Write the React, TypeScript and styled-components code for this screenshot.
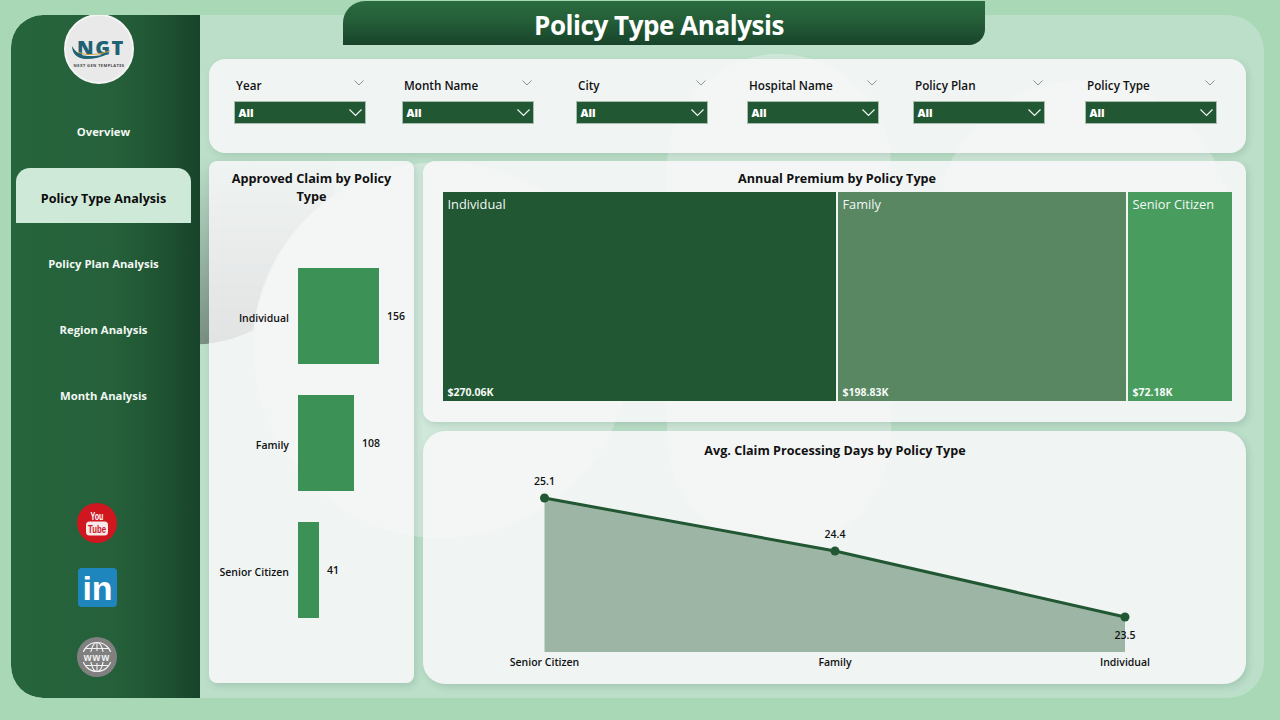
import React from 'react';
import styled, { createGlobalStyle } from 'styled-components';

const FONT = '"Open Sans", "Noto Sans", "Liberation Sans", sans-serif';

const filters = ['Year', 'Month Name', 'City', 'Hospital Name', 'Policy Plan', 'Policy Type'];
const navItems = ['Overview', 'Policy Type Analysis', 'Policy Plan Analysis', 'Region Analysis', 'Month Analysis'];
const claims = [
  { name: 'Individual', value: 156 },
  { name: 'Family', value: 108 },
  { name: 'Senior Citizen', value: 41 },
];
const premiums = [
  { name: 'Individual', value: '$270.06K', width: 393, color: '#215732' },
  { name: 'Family', value: '$198.83K', width: 288, color: '#588762' },
  { name: 'Senior Citizen', value: '$72.18K', width: 104, color: '#479c5e' },
];
const days = [
  { name: 'Senior Citizen', value: '25.1', x: 121.5, y: 27, labelY: 14 },
  { name: 'Family', value: '24.4', x: 412, y: 80, labelY: 67 },
  { name: 'Individual', value: '23.5', x: 702, y: 146, labelY: 168 },
];

function LogoMark() {
  return (
    <LogoSvg viewBox="0 0 70 70">
      <circle cx="35" cy="35" r="34" fill="#e9e9ea" stroke="#f4f4f4" strokeWidth="2" />
      <text x="37" y="41" textAnchor="middle" fontFamily={FONT} fontWeight="800" fontSize="20" letterSpacing="1.5" fill="#1e6274">
        NGT
      </text>
      <path d="M8 32 C8 40 14 45 22 45 C30 45 38 43 44 40 C34 42 24 43 18 41 C13 39 10 36 8 32Z" fill="#1e6274" />
      <path d="M14 38 C22 42 34 41 46 37" fill="none" stroke="#d9a441" strokeWidth="1" />
      <text x="35" y="53" textAnchor="middle" fontFamily={FONT} fontWeight="700" fontSize="4" letterSpacing="0.4" fill="#444">
        NEXT GEN TEMPLATES
      </text>
    </LogoSvg>
  );
}

function YoutubeIcon() {
  return (
    <svg width="40" height="40" viewBox="0 0 40 40">
      <circle cx="20" cy="20" r="20" fill="#d0171f" />
      <text x="20" y="17" textAnchor="middle" fontFamily="Liberation Sans, sans-serif" fontWeight="700" fontSize="10" textLength="13" lengthAdjust="spacingAndGlyphs" fill="#fff">
        You
      </text>
      <rect x="9" y="18.5" width="22" height="14" rx="3.5" fill="#f6e9e9" />
      <text x="20" y="29.5" textAnchor="middle" fontFamily="Liberation Sans, sans-serif" fontWeight="700" fontSize="10.5" textLength="18" lengthAdjust="spacingAndGlyphs" fill="#d0171f">
        Tube
      </text>
    </svg>
  );
}

function LinkedinIcon() {
  return (
    <svg width="39" height="39" viewBox="0 0 39 39">
      <rect width="39" height="39" rx="4" fill="#1f86bd" />
      <text x="19.5" y="32" textAnchor="middle" fontFamily="Liberation Sans, sans-serif" fontWeight="700" fontSize="34" fill="#fff">
        in
      </text>
    </svg>
  );
}

function WebIcon() {
  return (
    <svg width="40" height="40" viewBox="0 0 40 40">
      <circle cx="20" cy="20" r="20" fill="#808080" />
      <g fill="none" stroke="#f2f2f2" strokeWidth="1.1">
        <circle cx="20" cy="20" r="14.5" />
        <ellipse cx="20" cy="20" rx="6.5" ry="14.5" />
        <path d="M20 5.5V14M20 26V34.5M8 11.5H32M8 28.5H32" />
      </g>
      <rect x="4" y="15" width="32" height="10" fill="#808080" />
      <text x="20" y="24" textAnchor="middle" fontFamily="Liberation Sans, sans-serif" fontWeight="700" fontSize="10" letterSpacing="1" fill="#f2f2f2">
        www
      </text>
    </svg>
  );
}

function Chevron({ size }: { size: 'small' | 'large' }) {
  return size === 'small' ? (
    <ChevronSmall viewBox="0 0 10 6">
      <polyline points="0.5,0.5 5,5 9.5,0.5" />
    </ChevronSmall>
  ) : (
    <ChevronLarge viewBox="0 0 13 8">
      <polyline points="0.5,0.5 6.5,6.5 12.5,0.5" />
    </ChevronLarge>
  );
}

function App() {
  const area =
    'M' + days.map((d) => d.x + ' ' + d.y).join('L') + 'L702 181L121.5 181Z';
  const line = days.map((d) => d.x + ',' + d.y).join(' ');

  return (
    <Page>
      <GlobalStyle />
      <TitleBar>Policy Type Analysis</TitleBar>
      <Panel>
        <ShadeDisc />
        <HaloLeft />
        <HaloWide />
        <HaloRight />
        <Sidebar>
          <LogoMark />
          <Nav>
            {navItems.map((item, i) => (
              <NavItem key={item} $active={i === 1}>
                {item}
              </NavItem>
            ))}
          </Nav>
          <Socials>
            <SocialLink $top={0}>
              <YoutubeIcon />
            </SocialLink>
            <SocialLink $top={25}>
              <LinkedinIcon />
            </SocialLink>
            <SocialLink $top={29}>
              <WebIcon />
            </SocialLink>
          </Socials>
        </Sidebar>
        <Main>
          <FilterPanel>
            {filters.map((label) => (
              <Slicer key={label}>
                <SlicerHead>
                  <SlicerLabel>{label}</SlicerLabel>
                  <Chevron size="small" />
                </SlicerHead>
                <Dropdown>
                  All
                  <Chevron size="large" />
                </Dropdown>
              </Slicer>
            ))}
          </FilterPanel>
          <Charts>
            <ClaimCard>
              <ClaimTitle>Approved Claim by Policy Type</ClaimTitle>
              <BarList>
                {claims.map((c) => (
                  <BarRow key={c.name}>
                    <BarLabel>{c.name}</BarLabel>
                    <BarTrack>
                      <Bar style={{ width: Math.round(c.value * 0.519) }} />
                      <BarValue>{c.value}</BarValue>
                    </BarTrack>
                  </BarRow>
                ))}
              </BarList>
            </ClaimCard>
            <PremiumCard>
              <PremiumTitle>Annual Premium by Policy Type</PremiumTitle>
              <Treemap>
                {premiums.map((p) => (
                  <Tile key={p.name} $color={p.color} style={{ flexBasis: p.width }}>
                    <TileName>{p.name}</TileName>
                    <TileValue>{p.value}</TileValue>
                  </Tile>
                ))}
              </Treemap>
            </PremiumCard>
            <DaysCard>
              <DaysTitle>Avg. Claim Processing Days by Policy Type</DaysTitle>
              <LineChart viewBox="0 0 823 213">
                <path d={area} fill="#9db5a5" />
                <polyline points={line} fill="none" stroke="#215732" strokeWidth="3" />
                {days.map((d) => (
                  <g key={d.name}>
                    <circle cx={d.x} cy={d.y} r="4.5" fill="#215732" />
                    <PointLabel x={d.x} y={d.labelY} textAnchor="middle">
                      {d.value}
                    </PointLabel>
                    <PointLabel x={d.x} y="195" textAnchor="middle">
                      {d.name}
                    </PointLabel>
                  </g>
                ))}
              </LineChart>
            </DaysCard>
          </Charts>
        </Main>
      </Panel>
    </Page>
  );
}

export default App;

const GlobalStyle = createGlobalStyle`
  html, body {
    margin: 0;
    width: 1280px;
    height: 720px;
    overflow: hidden;
    background: #a8d8b5;
    font-family: ${FONT};
  }
`;

const Page = styled.div`
  position: relative;
  box-sizing: border-box;
  width: 1280px;
  height: 720px;
  padding: 15px 16px 22px 11px;
  background: #a8d8b5;
`;

const TitleBar = styled.h1`
  position: absolute;
  z-index: 3;
  top: 1px;
  left: 343px;
  box-sizing: border-box;
  width: 642px;
  height: 44px;
  margin: 0;
  padding-right: 10px;
  border-radius: 22px 0 16px 0;
  background: linear-gradient(180deg, #2a6b3f 0%, #245e38 45%, #18432a 100%);
  color: #fff;
  font-size: 26px;
  font-weight: 700;
  line-height: 48px;
  letter-spacing: -0.45px;
  text-align: center;
`;

const Panel = styled.div`
  position: relative;
  display: flex;
  height: 100%;
  overflow: hidden;
  border-radius: 32px 36px 36px 32px;
  background: #bcdfca;
`;

/* the shade only shows outside the left halo, so the mask cuts that circle out */
const ShadeDisc = styled.div`
  position: absolute;
  top: 40px;
  left: 34px;
  width: 290px;
  height: 290px;
  border-radius: 50%;
  background: linear-gradient(180deg, rgba(50, 60, 55, 0) 35%, rgba(50, 60, 55, 0.5) 100%);
  mask-image: radial-gradient(circle 188px at 395px 295px, transparent 187.5px, #000 188px);
`;

const HaloLeft = styled.div`
  position: absolute;
  top: 147px;
  left: 243px;
  width: 376px;
  height: 376px;
  border-radius: 50%;
  background: rgba(255, 255, 255, 0.3);
`;

const HaloWide = styled.div`
  position: absolute;
  top: 39px;
  left: 656px;
  width: 224px;
  height: 494px;
  border-radius: 112px;
  background: rgba(255, 255, 255, 0.3);
`;

const HaloRight = styled.div`
  position: absolute;
  top: 65px;
  left: 924px;
  width: 296px;
  height: 296px;
  border-radius: 50%;
  background: rgba(255, 255, 255, 0.3);
`;

const Sidebar = styled.aside`
  position: relative;
  z-index: 1;
  display: flex;
  flex-direction: column;
  flex: 0 0 189px;
  background: linear-gradient(90deg, #26653c 0%, #25603a 55%, #1f5433 78%, #17432a 100%);
  border-radius: 32px 0 0 32px;
`;

const LogoSvg = styled.svg`
  flex: none;
  width: 70px;
  height: 70px;
  margin: -1px 0 18px 53px;
`;

const Nav = styled.nav`
  display: flex;
  flex-direction: column;
  gap: 11px;
  width: 175px;
  margin-left: 5px;
`;

const NavItem = styled.a<{ $active: boolean }>`
  display: flex;
  align-items: center;
  justify-content: center;
  box-sizing: border-box;
  height: 55px;
  padding-top: ${({ $active }) => ($active ? '5px' : '4px')};
  border-radius: ${({ $active }) => ($active ? '14px 14px 0 0' : '0')};
  background: ${({ $active }) => ($active ? '#cfe9d8' : 'transparent')};
  color: ${({ $active }) => ($active ? '#0c0c0c' : '#f2f7f3')};
  font-size: ${({ $active }) => ($active ? '12.6px' : '11.3px')};
  font-weight: 700;
`;

const Socials = styled.div`
  display: flex;
  flex-direction: column;
  align-items: center;
  width: 40px;
  margin: auto 0 21px 66px;
`;

const SocialLink = styled.a<{ $top: number }>`
  display: block;
  height: 40px;
  margin-top: ${({ $top }) => $top}px;
`;

const Main = styled.main`
  position: relative;
  z-index: 1;
  display: flex;
  flex-direction: column;
  gap: 8px;
  flex: 1;
  padding: 44px 18px 14px 9px;
`;

const FilterPanel = styled.section`
  display: grid;
  grid-template-columns: 168px 174px 171px 166px 172px 132px;
  box-sizing: border-box;
  height: 94px;
  padding: 16px 0 0 25px;
  border-radius: 16px;
  background: rgba(253, 249, 252, 0.8);
  box-shadow: 2px 3px 7px rgba(40, 80, 60, 0.14);
`;

const Slicer = styled.div`
  display: flex;
  flex-direction: column;
  width: 132px;
`;

const SlicerHead = styled.div`
  display: flex;
  align-items: center;
  justify-content: space-between;
  height: 20px;
  margin-bottom: 6px;
  padding: 0 2px;
`;

const SlicerLabel = styled.span`
  color: #111;
  font-size: 11.7px;
  font-weight: 600;
`;

const ChevronSmall = styled.svg`
  width: 10px;
  height: 6px;
  margin-bottom: 5px;
  fill: none;
  stroke: #8d9590;
  stroke-width: 1;
`;

const ChevronLarge = styled.svg`
  width: 13px;
  height: 8px;
  fill: none;
  stroke: #f2f6f3;
  stroke-width: 1.2;
`;

const Dropdown = styled.div`
  display: flex;
  align-items: center;
  justify-content: space-between;
  box-sizing: border-box;
  height: 23px;
  padding: 0 3.5px;
  border: 1.5px solid #a9bdaf;
  background: #215732;
  color: #fff;
  font-size: 11px;
  font-weight: 800;
`;

const Charts = styled.div`
  display: grid;
  flex: 1;
  grid-template-columns: 205px 823px;
  grid-template-rows: 261px 253px;
  gap: 9px;
`;

const ClaimCard = styled.section`
  grid-row: 1 / 3;
  margin-bottom: 1px;
  padding: 8px 0 0;
  border-radius: 8px;
  background: rgba(253, 249, 252, 0.8);
  box-shadow: 2px 3px 7px rgba(40, 80, 60, 0.16);
`;

const ClaimTitle = styled.h2`
  width: 170px;
  height: 36px;
  margin: 0 auto 62.5px;
  color: #111;
  font-size: 12.7px;
  font-weight: 700;
  line-height: 18px;
  text-align: center;
`;

const BarList = styled.div`
  display: flex;
  flex-direction: column;
  gap: 31px;
`;

const BarRow = styled.div`
  display: grid;
  grid-template-columns: 80px 1fr;
  column-gap: 9px;
  align-items: center;
  height: 96px;
`;

const BarLabel = styled.span`
  padding-top: 5px;
  color: #111;
  font-size: 10.5px;
  font-weight: 600;
  text-align: right;
  white-space: nowrap;
`;

const BarTrack = styled.div`
  display: flex;
  align-items: center;
  gap: 8px;
  height: 100%;
`;

const Bar = styled.div`
  height: 100%;
  background: #3c9156;
`;

const BarValue = styled.span`
  color: #111;
  font-size: 10.5px;
  font-weight: 600;
`;

const PremiumCard = styled.section`
  display: flex;
  flex-direction: column;
  border-radius: 12px;
  background: rgba(253, 249, 252, 0.8);
  box-shadow: 2px 3px 7px rgba(40, 80, 60, 0.16);
`;

const CardTitle = styled.h2`
  height: 31px;
  margin: 0;
  color: #111;
  font-size: 12.6px;
  font-weight: 700;
  text-align: center;
`;

const PremiumTitle = styled(CardTitle)`
  padding-left: 5px;
  line-height: 35px;
`;

const DaysTitle = styled(CardTitle)`
  padding-left: 1px;
  line-height: 40px;
`;

const Treemap = styled.div`
  display: flex;
  gap: 2px;
  height: 209px;
  margin: 0 14px 0 20px;
`;

const Tile = styled.div<{ $color: string }>`
  display: flex;
  flex-direction: column;
  justify-content: space-between;
  box-sizing: border-box;
  flex-grow: 1;
  padding: 3px 4.5px 2px;
  background: ${({ $color }) => $color};
  color: #f4f8f5;
`;

const TileName = styled.span`
  font-size: 12.8px;
  line-height: 19px;
`;

const TileValue = styled.span`
  font-size: 10.5px;
  font-weight: 700;
  line-height: 14px;
`;

const DaysCard = styled.section`
  display: flex;
  flex-direction: column;
  border-radius: 22px;
  background: rgba(253, 249, 252, 0.8);
  box-shadow: 2px 3px 7px rgba(40, 80, 60, 0.16);
`;

const LineChart = styled.svg`
  display: block;
  width: 823px;
  height: 213px;
  margin-top: 9px;
`;

const PointLabel = styled.text`
  fill: #111;
  font-family: ${FONT};
  font-size: 10.5px;
  font-weight: 600;
`;
